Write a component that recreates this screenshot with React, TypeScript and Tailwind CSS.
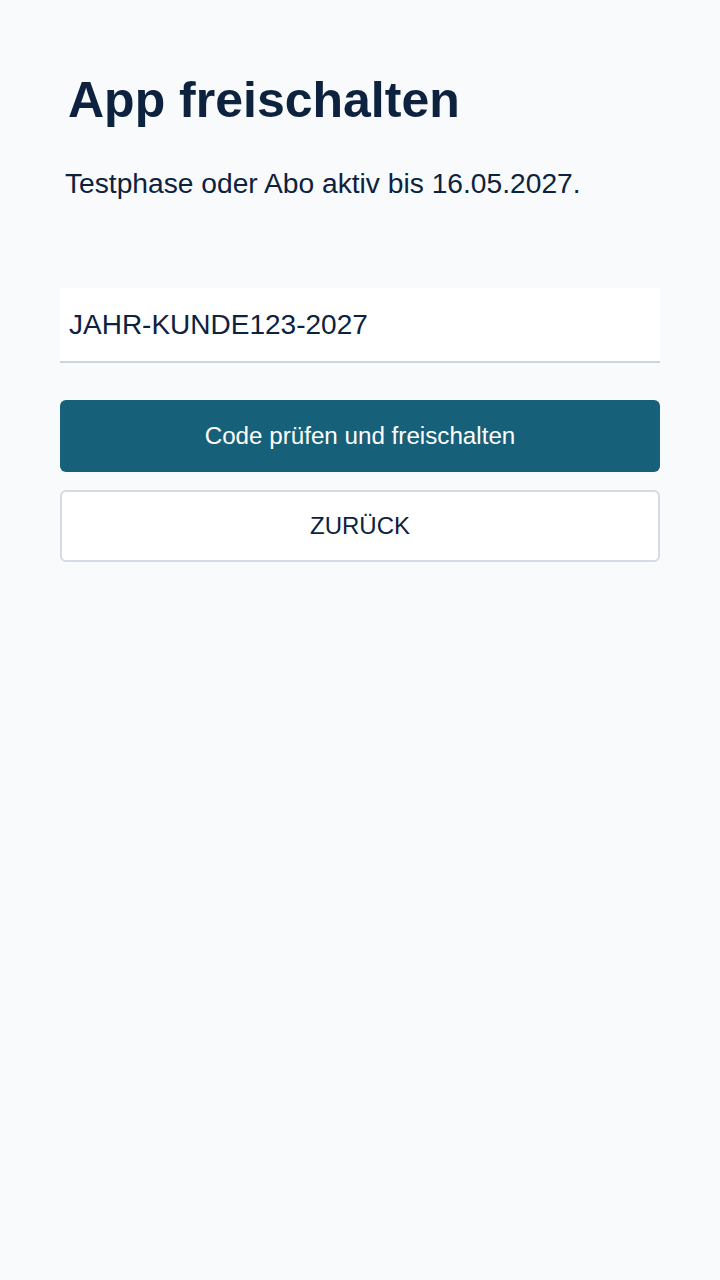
import React, { useState } from 'react';

export default function App() {
  const [code, setCode] = useState('JAHR-KUNDE123-2027');

  return (
    <div className="min-h-[1280px] w-full bg-[#f8fafc] font-['Liberation_Sans',Arial,sans-serif] text-[#0d223f]">
      <div className="flex flex-col px-[60px] pt-[70px]">
        <h1 className="pl-2 text-[50px] font-bold leading-[60px]">App freischalten</h1>
        <p className="mt-[36px] pl-[5px] text-[28.2px] leading-[34px]">
          Testphase oder Abo aktiv bis 16.05.2027.
        </p>

        <input
          value={code}
          onChange={(e) => setCode(e.target.value)}
          className="mt-[88px] block h-[75px] w-full border-b-2 border-[#cbd5e1] bg-white px-[9px] text-[28px] text-[#0d223f] outline-none"
        />

        <button className="mt-[37px] flex h-[72px] w-full items-center justify-center rounded-md bg-[#17607a] text-[24.2px] text-white">
          Code prüfen und freischalten
        </button>
        <button className="mt-[18px] flex h-[72px] w-full items-center justify-center rounded-md border-2 border-[#d3dbe5] bg-white text-[24px] text-[#0d223f]">
          ZURÜCK
        </button>
      </div>
    </div>
  );
}
